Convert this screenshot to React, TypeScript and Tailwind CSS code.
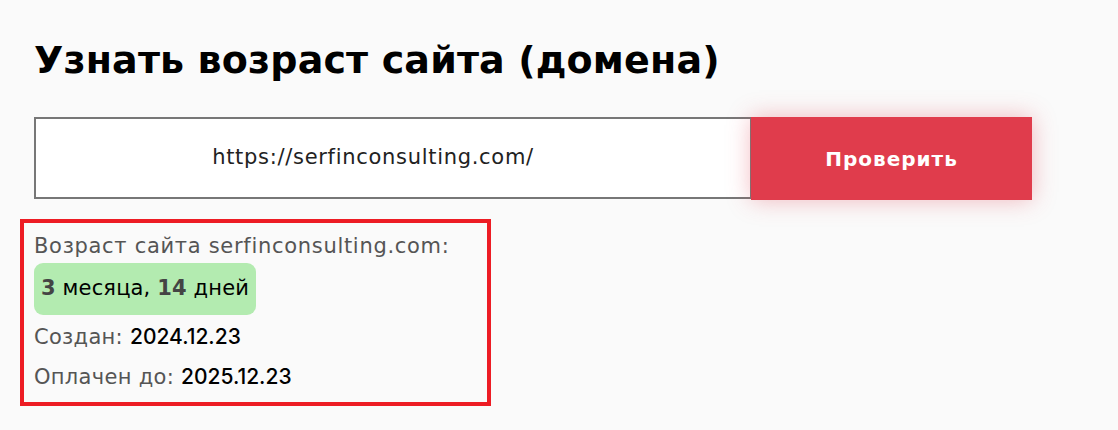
export default function App() {
  const font = { fontFamily: "'DejaVu Sans', 'Noto Sans', sans-serif" };
  const dateFont = { fontFamily: "Inter, 'DejaVu Sans', sans-serif" };

  return (
    <div className="min-h-screen bg-[#fafafa] pt-[37px] pl-[34px]" style={font}>
      <h1 className="text-[38px] leading-[46px] font-bold text-black tracking-[0.15px]">
        Узнать возраст сайта (домена)
      </h1>

      <div className="flex items-start mt-[34px]">
        <div className="w-[718px] h-[82px] border-2 border-[#777] bg-white flex items-center justify-center pr-[40px] text-[21px] tracking-[0.7px] text-[#222]">
          https://serfinconsulting.com/
        </div>
        <button className="w-[281px] h-[83px] -ml-[1px] bg-[#e03c4c] text-white text-[20px] tracking-[1px] font-bold shadow-[0_0_22px_rgba(224,60,76,0.35)]">
          Проверить
        </button>
      </div>

      <div className="mt-[19px] -ml-[14px] w-[471px] h-[187px] border-4 border-[#ed1c24] pt-[9px] pl-[10px] text-[21px] tracking-[0.7px]">
        <div className="leading-[28px] text-[#555]">Возраст сайта serfinconsulting.com:</div>
        <div className="mt-[3px] inline-flex items-center h-[52px] px-[7px] rounded-[9px] bg-[#b3ebb0] text-[21px] tracking-[0.15px] text-black">
          <span className="font-bold text-[#444]">3</span>
          <span>&nbsp;месяца,&nbsp;</span>
          <span className="font-bold text-[#444]">14</span>
          <span>&nbsp;дней</span>
        </div>
        <div className="leading-[39px] mt-[2px] text-[#555] tracking-[0.3px]">
          Создан:{" "}
          <span className="text-black font-medium tracking-normal" style={dateFont}>
            2024.12.23
          </span>
        </div>
        <div className="leading-[39px] text-[#555] tracking-[0.3px]">
          Оплачен до:{" "}
          <span className="text-black font-medium tracking-normal" style={dateFont}>
            2025.12.23
          </span>
        </div>
      </div>
    </div>
  );
}
